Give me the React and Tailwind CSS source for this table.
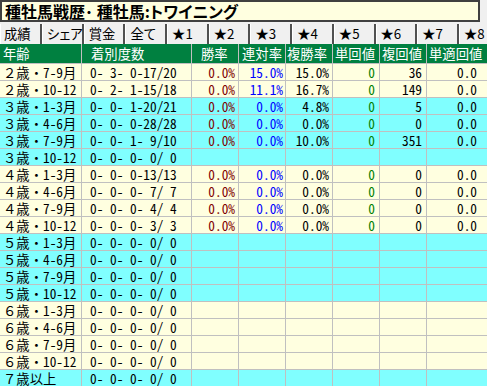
const rows = [
  { age: '２歳・7-9月', rec: '0- 3- 0-17/20', w: '0.0%', r: '15.0%', f: '15.0%', t: '0', fk: '36', ta: '0.0', cyan: false },
  { age: '２歳・10-12', rec: '0- 2- 1-15/18', w: '0.0%', r: '11.1%', f: '16.7%', t: '0', fk: '149', ta: '0.0', cyan: false },
  { age: '３歳・1-3月', rec: '0- 0- 1-20/21', w: '0.0%', r: '0.0%', f: '4.8%', t: '0', fk: '5', ta: '0.0', cyan: true },
  { age: '３歳・4-6月', rec: '0- 0- 0-28/28', w: '0.0%', r: '0.0%', f: '0.0%', t: '0', fk: '0', ta: '0.0', cyan: true },
  { age: '３歳・7-9月', rec: '0- 0- 1- 9/10', w: '0.0%', r: '0.0%', f: '10.0%', t: '0', fk: '351', ta: '0.0', cyan: true },
  { age: '３歳・10-12', rec: '0- 0- 0- 0/ 0', cyan: true },
  { age: '４歳・1-3月', rec: '0- 0- 0-13/13', w: '0.0%', r: '0.0%', f: '0.0%', t: '0', fk: '0', ta: '0.0', cyan: false },
  { age: '４歳・4-6月', rec: '0- 0- 0- 7/ 7', w: '0.0%', r: '0.0%', f: '0.0%', t: '0', fk: '0', ta: '0.0', cyan: false },
  { age: '４歳・7-9月', rec: '0- 0- 0- 4/ 4', w: '0.0%', r: '0.0%', f: '0.0%', t: '0', fk: '0', ta: '0.0', cyan: false },
  { age: '４歳・10-12', rec: '0- 0- 0- 3/ 3', w: '0.0%', r: '0.0%', f: '0.0%', t: '0', fk: '0', ta: '0.0', cyan: false },
  { age: '５歳・1-3月', rec: '0- 0- 0- 0/ 0', cyan: true },
  { age: '５歳・4-6月', rec: '0- 0- 0- 0/ 0', cyan: true },
  { age: '５歳・7-9月', rec: '0- 0- 0- 0/ 0', cyan: true },
  { age: '５歳・10-12', rec: '0- 0- 0- 0/ 0', cyan: true },
  { age: '６歳・1-3月', rec: '0- 0- 0- 0/ 0', cyan: false },
  { age: '６歳・4-6月', rec: '0- 0- 0- 0/ 0', cyan: false },
  { age: '６歳・7-9月', rec: '0- 0- 0- 0/ 0', cyan: false },
  { age: '６歳・10-12', rec: '0- 0- 0- 0/ 0', cyan: false },
  { age: '７歳以上', rec: '0- 0- 0- 0/ 0', cyan: true },
];

const tabs = ['成績', 'シェア', '賞金', '全て', '★1', '★2', '★3', '★4', '★5', '★6', '★7', '★8'];

const mono = { fontFamily: "'Noto Sans Mono CJK JP', 'Noto Sans CJK JP', monospace" };
const prop = { fontFamily: "'Noto Sans CJK JP', sans-serif" };

export default function App() {
  return (
    <div className="w-[487px] h-[386px] overflow-hidden bg-[#f0f0f0]" style={mono}>
      {/* title */}
      <div
        className="w-[480px] h-[22px] bg-[#ffffe0] border-2 border-[#404040] flex items-center pl-[3px] text-[16px] font-bold text-black leading-[18px] whitespace-pre [font-feature-settings:'palt']"
        style={prop}
      >
        種牡馬戦歴･ 種牡馬:トワイニング
      </div>

      {/* tabs */}
      <div className="mt-[2px] h-[20px] flex w-[540px] text-[13.33px] leading-[16px] text-black [font-feature-settings:'palt']" style={prop}>
        {tabs.map((t, i) => (
          <div
            key={t}
            className={`${i === 0 ? 'w-[42px] pl-[3px]' : 'w-[41.7px] pl-[4px]'} h-full flex items-center whitespace-nowrap border-r-2 border-r-[#505050] border-l border-l-white shrink-0`}
          >
            {t}
          </div>
        ))}
      </div>

      {/* table */}
      <div className="w-[560px] text-[13.33px] leading-[15px]">
        <div className="flex h-[20px] bg-[#008040] text-white border-b border-[#c0c0c0]">
          <div className="w-[82px] pl-[3px] flex items-center border-r border-[#c0c0c0]">年齢</div>
          <div className="w-[110px] pl-[9px] flex items-center border-r border-[#c0c0c0]">着別度数</div>
          <div className="w-[47px] pl-[9px] flex items-center border-r border-[#c0c0c0]">勝率</div>
          <div className="w-[47px] pl-[3px] flex items-center border-r border-[#c0c0c0] whitespace-nowrap">連対率</div>
          <div className="w-[47px] pl-[1px] flex items-center border-r border-[#c0c0c0] whitespace-nowrap">複勝率</div>
          <div className="w-[47px] pl-[2px] flex items-center border-r border-[#c0c0c0] whitespace-nowrap">単回値</div>
          <div className="w-[47px] pl-[2px] flex items-center border-r border-[#c0c0c0] whitespace-nowrap">複回値</div>
          <div className="w-[70px] pl-[2px] flex items-center whitespace-nowrap">単適回値</div>
        </div>
        {rows.map((r) => (
          <div key={r.age} className={`flex h-[17px] border-b border-[#c0c0c0] ${r.cyan ? 'bg-[#80ffff]' : 'bg-[#ffffe0]'}`}>
            <div className="w-[82px] pl-[3px] flex items-center border-r border-[#c0c0c0] whitespace-pre">{r.age}</div>
            <div className="w-[110px] pl-[8px] flex items-center border-r border-[#c0c0c0] whitespace-pre">{r.rec}</div>
            <div className="w-[47px] pr-[3px] flex items-center justify-end border-r border-[#c0c0c0] text-[#800000]">{r.w}</div>
            <div className="w-[47px] pr-[2px] flex items-center justify-end border-r border-[#c0c0c0] text-[#0000ff]">{r.r}</div>
            <div className="w-[47px] pr-[3px] flex items-center justify-end border-r border-[#c0c0c0]">{r.f}</div>
            <div className="w-[47px] pr-[4px] flex items-center justify-end border-r border-[#c0c0c0] text-[#008000]">{r.t}</div>
            <div className="w-[47px] pr-[4px] flex items-center justify-end border-r border-[#c0c0c0]">{r.fk}</div>
            <div className="w-[53px] pr-[3px] flex items-center justify-end">{r.ta}</div>
          </div>
        ))}
      </div>
    </div>
  );
}
